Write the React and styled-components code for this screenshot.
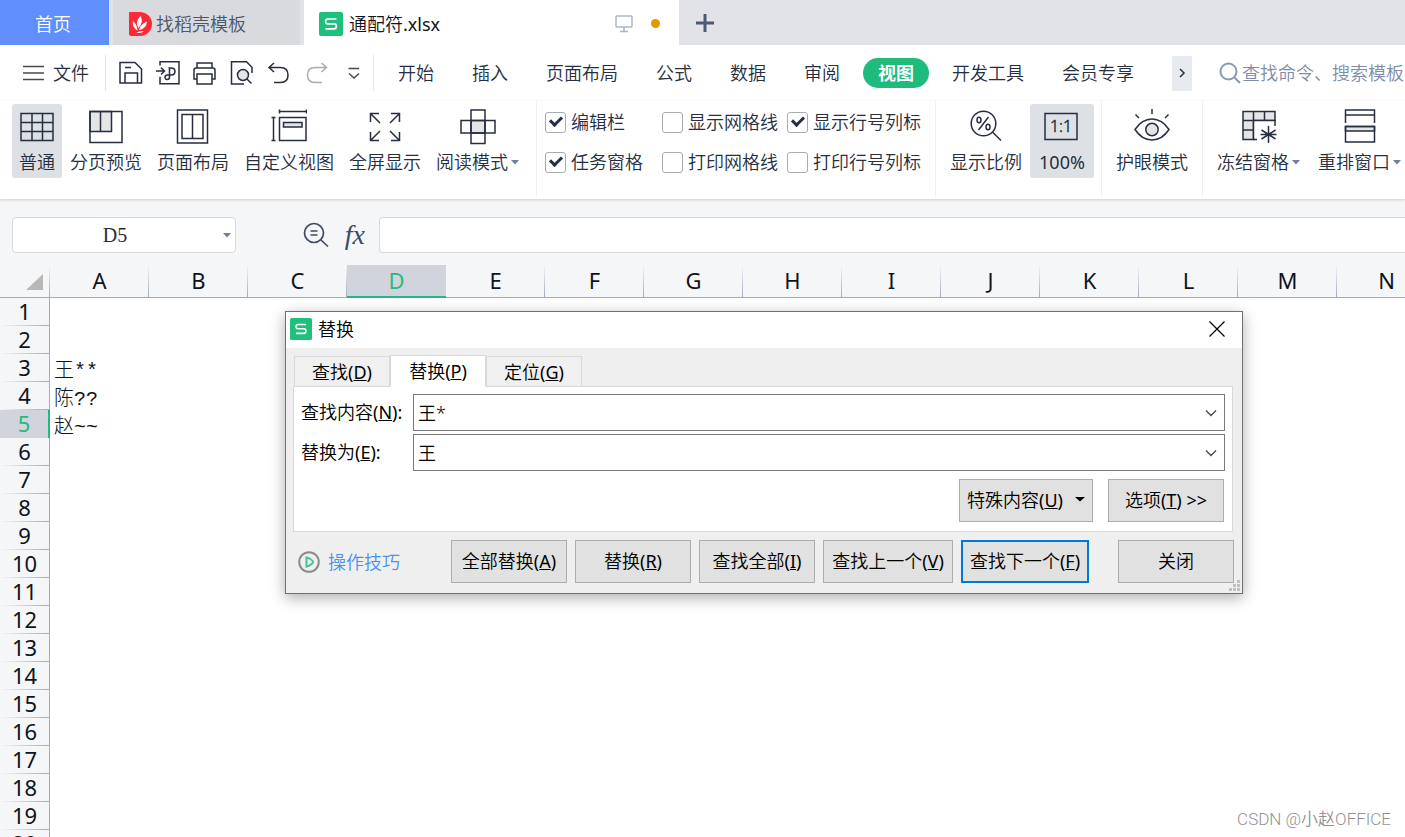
import React from 'react';
import styled, { createGlobalStyle, css } from 'styled-components';

const ink = '#262e40';
const green = '#1fbb7d';
const soft = '#e4e5e7';

const columns = ['A', 'B', 'C', 'D', 'E', 'F', 'G', 'H', 'I', 'J', 'K', 'L', 'M', 'N'];
const rows = Array.from({ length: 20 }, (_, i) => i + 1);
const values = { A3: '王**', A4: '陈??', A5: '赵~~' };
const menuTabs = ['开始', '插入', '页面布局', '公式', '数据', '审阅', '视图', '开发工具', '会员专享'];

const checks = [
  { id: 'edit-bar', label: '编辑栏', on: true },
  { id: 'show-grid', label: '显示网格线', on: false },
  { id: 'show-heads', label: '显示行号列标', on: true },
  { id: 'task-pane', label: '任务窗格', on: true },
  { id: 'print-grid', label: '打印网格线', on: false },
  { id: 'print-heads', label: '打印行号列标', on: false },
];

const Icon = ({ size = 24, width, stroke = ink, weight = 1.5, children }) => (
  <svg
    width={width || size}
    height={size}
    viewBox={`0 0 ${width || size} ${size}`}
    fill="none"
    stroke={stroke}
    strokeWidth={weight}
    aria-hidden="true"
  >
    {children}
  </svg>
);

const Caret = ({ color = '#6f7f99', width = 8 }) => (
  <svg width={width} height="5" viewBox="0 0 8 5" preserveAspectRatio="none" aria-hidden="true">
    <path d="M0 0h8L4 4.5z" fill={color} />
  </svg>
);

const SheetLogo = ({ size }) => (
  <svg width={size} height={size} viewBox="0 0 24 24" aria-hidden="true">
    <rect width="24" height="24" rx="2" fill="#1fbf7c" />
    <path
      d="M17.5 7H8.8Q6.6 7 6.6 9.4T8.8 11.8h6.4q2.2 0 2.2 2.5t-2.2 2.5H6.5"
      fill="none"
      stroke="#fff"
      strokeWidth="1.7"
    />
  </svg>
);

const quickIcons = [
  {
    name: '保存',
    icon: (
      <Icon>
        <path d="M1 1.500h15l6.500 6.500v14H1zM6 22v-10h12.500v10M6 6.500h6" />
      </Icon>
    ),
  },
  {
    name: '输出为PDF',
    icon: (
      <Icon>
        <path d="M4 4.500V.8h19v22H4v-7M0 10h8.500M5 6.500l3.500 3.500L5 13.500" />
        <path d="M12.500 7h2.500q4 0 4 3.500t-4 3.500h-3.500q-2.500 0-2.500 2.300t2.300 2.200 2.200-2.500V7" />
      </Icon>
    ),
  },
  {
    name: '打印',
    icon: (
      <Icon>
        <path d="M4 7V2h15v5M4 18H1V9q0-2 2-2h17q2 0 2 2v9h-3M4 13h15v10H4z" />
      </Icon>
    ),
  },
  {
    name: '打印预览',
    icon: (
      <Icon>
        <path d="M14 23H1.500V.8H16.500l5.500 5.500V12" />
        <circle cx="13" cy="14" r="5.500" fill={soft} />
        <path d="M17 18l4.500 4.500" />
      </Icon>
    ),
  },
  {
    name: '撤销',
    icon: (
      <Icon>
        <path d="M7 2L2 6.500 7 11M2 6.500h11.500q7.500 0 7.500 7.500t-7.500 7.500H7" />
      </Icon>
    ),
  },
  {
    name: '恢复',
    icon: (
      <Icon stroke="#a9abaf">
        <path d="M17.500 2l5 4.500-5 4.500M22.500 6.500H11Q3.500 6.500 3.500 14T11 21.500h7" />
      </Icon>
    ),
  },
  {
    name: '更多',
    icon: (
      <Icon stroke="#4a4a4a">
        <path d="M7.500 7.500h10.500M8 12.500l5 4.500 5-4.500" />
      </Icon>
    ),
  },
];

const viewTools = [
  {
    label: '普通',
    active: true,
    icon: (
      <Icon size={36}>
        <path d="M2 4.500h32v27H2zM13 4.500v27M23.500 4.500v27M2 13.500h32M2 22.500h32" />
      </Icon>
    ),
  },
  {
    label: '分页预览',
    icon: (
      <Icon size={36}>
        <path d="M2 2.500h21.500v20H2z" fill={soft} />
        <path d="M2 2.500h32v31H2zM12.500 2.500v20" />
      </Icon>
    ),
  },
  {
    label: '页面布局',
    icon: (
      <Icon size={36}>
        <path d="M2.500 1h30v33h-30zM7 5.500h21v24H7zM17.500 5.500v24" />
      </Icon>
    ),
  },
  {
    label: '自定义视图',
    icon: (
      <Icon size={36}>
        <path d="M8.500 2.500h27M8.500 .5v4M35.500 .5v4M2.500 8.500v23M.5 8.500h4M.5 31.500h4M8.500 8.500H35v23H8.500z" />
        <path d="M12.500 13.500h18.500v4.500H12.500z" fill={soft} />
      </Icon>
    ),
  },
  {
    label: '全屏显示',
    icon: (
      <Icon size={36}>
        <path d="M3.500 13V4.500H12M3.500 4.500L13 14M24 4.500h8.500V13M32.500 4.500L23 14M3.500 23v8.500H12M3.500 31.500L13 22M24 31.500h8.500V23M32.500 31.500L23 22" />
      </Icon>
    ),
  },
  {
    label: '阅读模式',
    menu: true,
    icon: (
      <Icon size={36}>
        <path d="M11 11.500h14v12.500H11z" fill={soft} />
        <path d="M1 11.500h34v12.500H1zM11 1h14v33.500H11z" />
      </Icon>
    ),
  },
];

const zoomTools = [
  {
    label: '显示比例',
    icon: (
      <Icon size={36}>
        <circle cx="15.500" cy="14.500" r="12.300" />
        <path d="M24.500 23l8.500 8.500M20.500 8l-10 13" />
        <ellipse cx="11" cy="11" rx="2" ry="2.800" />
        <ellipse cx="20" cy="18" rx="2" ry="2.800" />
      </Icon>
    ),
  },
  {
    label: '100%',
    active: true,
    latin: true,
    width: 64,
    icon: (
      <Icon size={36}>
        <path d="M1 4.500h32v26H1z" />
        <text
          x="17"
          y="23"
          textAnchor="middle"
          fontSize="16"
          fontFamily="'Noto Sans', sans-serif"
          fill={ink}
          stroke={ink}
          strokeWidth=".5"
        >
          1:1
        </text>
      </Icon>
    ),
  },
];

const eyeTools = [
  {
    label: '护眼模式',
    icon: (
      <Icon size={36}>
        <path d="M1 20.500Q8 10 18 10t17 10.500Q28 31 18 31T1 20.500z" />
        <circle cx="18" cy="20.500" r="6.200" fill={soft} />
        <path d="M18 0v5M1.500 5.500L5 9M34.500 5.500L31 9" />
      </Icon>
    ),
  },
];

const windowTools = [
  {
    label: '冻结窗格',
    menu: true,
    icon: (
      <Icon size={36}>
        <path d="M2 2.500h32v9H12.500v19H2z" fill={soft} />
        <path
          d="M12.500 11.500H34v19H12.500z"
          fill="#fff"
          stroke="none"
        />
        <path d="M2 11.500h32M12.500 2.500v28M23.500 2.500v9M2 21h10.500M34 11v6M12 30.500h4M27.500 17v17M20.500 21l14 9M34.500 21l-14 9M19.500 25.500h16" />
      </Icon>
    ),
  },
  {
    label: '重排窗口',
    menu: true,
    icon: (
      <Icon size={36}>
        <path d="M3.500 14V1h29v13M3.500 6h29" />
        <path d="M3.500 17.500h29V22h-29z" fill={soft} />
        <path d="M3.500 17.500h29V33h-29z" />
      </Icon>
    ),
  },
];

const ToolList = ({ items }) =>
  items.map((item) => (
    <ToolButton key={item.label} $active={item.active} $width={item.width}>
      {item.icon}
      <ToolLabel $latin={item.latin}>
        {item.label}
        {item.menu && <Caret />}
      </ToolLabel>
    </ToolButton>
  ));

const Key = ({ text, letter, after }) => (
  <span>
    {text}
    <Latin>
      (<u>{letter}</u>){after}
    </Latin>
  </span>
);

const ComboField = ({ id, text, letter, value }) => (
  <Field>
    <FieldLabel htmlFor={id}>
      <Key text={text} letter={letter} after=":" />
    </FieldLabel>
    <Combo>
      <ComboInput id={id} defaultValue={value} />
      <button aria-label="展开">
        <Icon size={12} stroke="#444" weight={1.3}>
          <path d="M1 3.500l5 5 5-5" />
        </Icon>
      </button>
    </Combo>
  </Field>
);

const ReplaceDialog = () => (
  <Dialog role="dialog" aria-label="替换">
    <TitleBar>
      <SheetLogo size={22} />
      <Title>替换</Title>
      <CloseButton aria-label="关闭">
        <Icon size={16} stroke="#000" weight={1.2}>
          <path d="M.5 .5l15 15M15.500 .5l-15 15" />
        </Icon>
      </CloseButton>
    </TitleBar>
    <DialogBody>
      <DialogTabs role="tablist">
        <DialogTab role="tab">
          <Key text="查找" letter="D" />
        </DialogTab>
        <DialogTab role="tab" aria-selected="true" $active>
          <Key text="替换" letter="P" />
        </DialogTab>
        <DialogTab role="tab">
          <Key text="定位" letter="G" />
        </DialogTab>
      </DialogTabs>
      <Panel>
        <ComboField id="find-what" text="查找内容" letter="N" value="王*" />
        <ComboField id="replace-with" text="替换为" letter="E" value="王" />
        <PanelActions>
          <DialogButton $width={134}>
            <Key text="特殊内容" letter="U" />
            <Caret color="#000" width={10} />
          </DialogButton>
          <DialogButton>
            <Key text="选项" letter="T" after=" >>" />
          </DialogButton>
        </PanelActions>
      </Panel>
      <Footer>
        <TipsLink href="#tips">
          <Icon size={22} stroke="#8c8c8c" weight={2}>
            <circle cx="11" cy="11" r="9.800" />
            <path d="M8.500 6.500v9l3-1q3.500-2 3.500-3.500t-3.500-3.500z" stroke="#43c795" />
          </Icon>
          操作技巧
        </TipsLink>
        <FooterActions>
          <DialogButton>
            <Key text="全部替换" letter="A" />
          </DialogButton>
          <DialogButton>
            <Key text="替换" letter="R" />
          </DialogButton>
          <DialogButton>
            <Key text="查找全部" letter="I" />
          </DialogButton>
          <DialogButton $width={130}>
            <Key text="查找上一个" letter="V" />
          </DialogButton>
          <DialogButton $width={128} $primary>
            <Key text="查找下一个" letter="F" />
          </DialogButton>
        </FooterActions>
        <DialogButton>关闭</DialogButton>
      </Footer>
    </DialogBody>
    <Grip>
      <svg width="11" height="11" viewBox="0 0 11 11" fill="#bfbfbf" aria-hidden="true">
        <path d="M8 0h3v3H8zM4 4h3v3H4zM8 4h3v3H8zM0 8h3v3H0zM4 8h3v3H4zM8 8h3v3H8z" />
      </svg>
    </Grip>
  </Dialog>
);

const App = () => {
  return (
    <>
      <GlobalStyle />
      <Page>
        <FileTabs>
          <HomeTab>首页</HomeTab>
          <FileTab $width={187}>
            <svg width="24" height="24" viewBox="0 0 24 24" aria-hidden="true">
              <path d="M1 0h11a12 12 0 0 1 0 24H3q-2 0-2-2z" fill="#ff2a38" />
              <path
                d="M10.500 16Q6.500 10 12.500 4q3.500 6-2 12zM9.500 18.500Q3.500 15 5 9q4.500 4 4.500 9.500zM11 18q1.500-6 8-8.500-.5 7-8 8.500zM8.500 20.500q4-2 7.500-1.500-3.500 3-7.500 1.500z"
                fill="#fff"
              />
            </svg>
            找稻壳模板
          </FileTab>
          <FileTab $width={375} $active>
            <SheetLogo size={24} />
            <span>
              通配符<Latin>.xlsx</Latin>
            </span>
            <TabStatus>
              <Icon size={18} stroke="#a9b5cc">
                <path d="M1 2q0-1 1-1h14q1 0 1 1v9q0 1-1 1H2q-1 0-1-1zM9 12v4M5 16.500h8" />
              </Icon>
              <Dot />
            </TabStatus>
          </FileTab>
          <AddTab aria-label="新建">
            <Icon size={20} stroke="#4c5876" weight={3}>
              <path d="M10 1v18M1 10h18" />
            </Icon>
          </AddTab>
        </FileTabs>

        <MenuBar>
          <FileMenu>
            <Icon size={16} width={21} stroke="#4a4a4a">
              <path d="M0 1.500h21M0 8h21M0 14.500h21" />
            </Icon>
            文件
          </FileMenu>
          <QuickBar>
            {quickIcons.map((item) => (
              <QuickButton key={item.name} aria-label={item.name}>
                {item.icon}
              </QuickButton>
            ))}
          </QuickBar>
          <MenuTabs>
            {menuTabs.map((name) => (
              <MenuTab key={name} href="#ribbon" $active={name === '视图'}>
                {name}
              </MenuTab>
            ))}
          </MenuTabs>
          <MoreButton aria-label="更多选项卡">
            <Icon size={10}>
              <path d="M3 1l4 4-4 4" />
            </Icon>
          </MoreButton>
          <Search>
            <Icon size={22} stroke="#8b99b3" weight={2}>
              <circle cx="9.500" cy="9.500" r="8" />
              <path d="M15 15l6 6" />
            </Icon>
            <SearchInput aria-label="搜索" placeholder="查找命令、搜索模板" />
          </Search>
        </MenuBar>

        <Ribbon id="ribbon">
          <ToolGroup $pad="0 10px 0 12px">
            <ToolList items={viewTools} />
          </ToolGroup>
          <ToolGroup $pad="0 14px 0 8px">
            <CheckGrid>
              {checks.map((item) => (
                <CheckLabel key={item.id} htmlFor={item.id}>
                  <CheckBox id={item.id} type="checkbox" defaultChecked={item.on} />
                  {item.label}
                </CheckLabel>
              ))}
            </CheckGrid>
          </ToolGroup>
          <ToolGroup>
            <ToolList items={zoomTools} />
          </ToolGroup>
          <ToolGroup>
            <ToolList items={eyeTools} />
          </ToolGroup>
          <ToolGroup>
            <ToolList items={windowTools} />
          </ToolGroup>
        </Ribbon>

        <FormulaBar>
          <NameBox>
            <NameInput aria-label="名称框" defaultValue="D5" />
            <Caret />
          </NameBox>
          <FormulaTools>
            <FormulaButton aria-label="查找">
              <Icon size={26} stroke="#404b62" weight={1.700}>
                <circle cx="11" cy="11" r="9.500" />
                <path d="M18 18l7 6.500M7.500 9h7M7.500 13h7" />
              </Icon>
            </FormulaButton>
            <FormulaButton>fx</FormulaButton>
          </FormulaTools>
          <FormulaInput aria-label="编辑栏" />
        </FormulaBar>

        <Workspace>
          <Sheet>
            <colgroup>
              <col width="50" />
              {columns.map((name) => (
                <col key={name} width="99" />
              ))}
            </colgroup>
            <thead>
              <tr>
                <Corner>
                  <svg width="17" height="16" viewBox="0 0 17 16" aria-hidden="true">
                    <path d="M17 0v16H0z" fill="#b8b8b8" />
                  </svg>
                </Corner>
                {columns.map((name) => (
                  <ColumnHead key={name} scope="col" $active={name === 'D'}>
                    {name}
                  </ColumnHead>
                ))}
              </tr>
            </thead>
            <tbody>
              {rows.map((row) => (
                <tr key={row}>
                  <RowHead scope="row" $active={row === 5}>
                    {row}
                  </RowHead>
                  {columns.map((name) => (
                    <Cell key={name}>{values[name + row]}</Cell>
                  ))}
                </tr>
              ))}
            </tbody>
          </Sheet>
          <ReplaceDialog />
          <Credit>CSDN @小赵OFFICE</Credit>
        </Workspace>
      </Page>
    </>
  );
};

export default App;

const GlobalStyle = createGlobalStyle`
  *, *::after {
    box-sizing: border-box;
  }
  body {
    margin: 0;
    overflow: hidden;
  }
  body, button, input {
    font-family: 'Noto Sans', 'Noto Sans CJK SC', sans-serif;
    font-size: 18px;
    font-weight: 350;
    line-height: 24px;
    color: ${ink};
  }
  button {
    padding: 0;
    border: 0;
    background: none;
    white-space: nowrap;
  }
  a {
    text-decoration: none;
    white-space: nowrap;
  }
  svg {
    display: block;
    flex: none;
  }
`;

const Latin = styled.span`
  font-weight: 400;
`;

const Page = styled.div`
  height: 100vh;
  display: flex;
  flex-direction: column;
  overflow: hidden;
  background: #fff;
`;

const FileTabs = styled.div`
  flex: none;
  height: 45px;
  display: flex;
  gap: 4px;
  background: #e2e3e8;
`;

const HomeTab = styled.button`
  width: 109px;
  padding: 2px 3px 0 0;
  background: #608ffc;
  color: #fff;
`;

const FileTab = styled.button`
  width: ${({ $width }) => $width}px;
  padding: 2px 15px 0;
  display: flex;
  align-items: center;
  gap: ${({ $active }) => ($active ? 6 : 4)}px;
  background: ${({ $active }) => ($active ? '#fff' : '#d9dade')};
  color: ${({ $active }) => ($active ? '#10131a' : '#4c566b')};
`;

const TabStatus = styled.span`
  margin-left: auto;
  padding-right: 4px;
  display: flex;
  align-items: center;
  gap: 18px;
`;

const Dot = styled.span`
  width: 9px;
  height: 9px;
  border-radius: 50%;
  background: #e59700;
`;

const AddTab = styled.button`
  width: 44px;
  display: flex;
  align-items: center;
  justify-content: center;
`;

const MenuBar = styled.div`
  flex: none;
  height: 56px;
  display: flex;
  align-items: center;
`;

const FileMenu = styled.button`
  height: 36px;
  padding: 0 16px 0 23px;
  display: flex;
  align-items: center;
  gap: 9px;
  border-right: 1px solid #e4e5e7;
`;

const QuickBar = styled.div`
  height: 36px;
  padding: 0 2px 0 6px;
  display: flex;
  border-right: 1px solid #e4e5e7;
`;

const QuickButton = styled.button`
  width: 37px;
  display: flex;
  align-items: center;
  justify-content: center;
`;

const MenuTabs = styled.nav`
  padding: 0 23px 0 9px;
  display: flex;
  gap: 8px;
`;

const MenuTab = styled.a`
  height: 30px;
  padding: 0 15px;
  border-radius: 15px;
  line-height: 30px;
  color: ${ink};
  ${({ $active }) =>
    $active &&
    css`
      background: ${green};
      color: #fff;
      font-weight: 700;
    `}
`;

const MoreButton = styled.button`
  flex: none;
  width: 20px;
  height: 35px;
  display: flex;
  align-items: center;
  justify-content: center;
  background: #e7eaee;
`;

const Search = styled.div`
  flex: 1;
  min-width: 0;
  padding-left: 27px;
  display: flex;
  align-items: center;
  gap: 1px;
`;

const SearchInput = styled.input`
  flex: 1;
  min-width: 0;
  padding: 0;
  border: 0;
  outline: 0;
  &::placeholder {
    color: #7f8ca6;
    opacity: 1;
  }
`;

const Ribbon = styled.div`
  flex: none;
  position: relative;
  padding-bottom: 3px;
  height: 98px;
  display: flex;
  box-shadow: 0 1px 3px rgba(0, 0, 0, 0.16);
`;

const ToolGroup = styled.div`
  flex: none;
  padding: ${({ $pad }) => $pad || '0 7px'};
  display: flex;
  gap: 1px;
  border-right: 1px solid #eff0f2;
  &:last-child {
    gap: 4px;
    border-right: 0;
  }
`;

const ToolButton = styled.button`
  height: 74px;
  min-width: ${({ $width }) => $width || 50}px;
  margin-top: 3px;
  padding: 5px 7px 4px;
  display: flex;
  flex-direction: column;
  align-items: center;
  justify-content: space-between;
  border-radius: 3px;
  background: ${({ $active }) => ($active ? '#dde1e5' : 'transparent')};
`;

const ToolLabel = styled.span`
  display: flex;
  align-items: center;
  gap: 3px;
  font-weight: ${({ $latin }) => ($latin ? 400 : 350)};
`;

const CheckGrid = styled.div`
  height: 80px;
  margin-top: 1px;
  display: grid;
  grid-template-columns: 117px 125px auto;
  align-items: center;
`;

const CheckLabel = styled.label`
  display: flex;
  align-items: center;
  gap: 5px;
  white-space: nowrap;
`;

const CheckBox = styled.input`
  appearance: none;
  width: 21px;
  height: 21px;
  margin: 0;
  display: grid;
  place-items: center;
  border: 1px solid #a9abb3;
  border-radius: 3px;
  background: #fff;
  &:checked::after {
    content: '';
    width: 12px;
    height: 8px;
    margin-bottom: 4px;
    border: solid ${ink};
    border-width: 0 0 3px 3px;
    transform: rotate(-45deg);
  }
`;

const FormulaBar = styled.div`
  flex: none;
  height: 66px;
  padding: 18px 0 12px 12px;
  display: flex;
  background: #f5f6f8;
`;

const NameBox = styled.div`
  width: 224px;
  padding-right: 4px;
  display: flex;
  align-items: center;
  border: 1px solid #d7d9de;
  border-radius: 4px;
  background: #fff;
`;

const NameInput = styled.input`
  flex: 1;
  min-width: 0;
  padding: 0 6px 0 0;
  border: 0;
  outline: 0;
  background: none;
  font-family: 'Liberation Serif', serif;
  font-size: 20px;
  text-align: center;
`;

const FormulaTools = styled.div`
  width: 143px;
  padding-right: 14px;
  display: flex;
  align-items: center;
  justify-content: flex-end;
  gap: 16px;
`;

const FormulaButton = styled.button`
  font-family: 'Liberation Serif', serif;
  font-size: 28px;
  font-style: italic;
  color: #404b62;
`;

const FormulaInput = styled.input`
  flex: 1;
  min-width: 0;
  border: 1px solid #d7d9de;
  border-right: 0;
  border-radius: 4px 0 0 4px;
  outline: 0;
  background: #fff;
`;

const Workspace = styled.div`
  flex: 1;
  min-height: 0;
  position: relative;
  overflow: hidden;
`;

const Sheet = styled.table`
  width: 1436px;
  table-layout: fixed;
  border-collapse: separate;
  border-spacing: 0;
`;

const Corner = styled.td`
  height: 33px;
  padding: 0 7px 7px 0;
  vertical-align: bottom;
  background: linear-gradient(#f5f6f800, #a3abbf) right / 1px 100% no-repeat #f5f6f8;
  border-bottom: 1px solid #a3abbf;
  svg {
    margin-left: auto;
  }
`;

const ColumnHead = styled.th`
  height: 33px;
  padding: 0 0 2px;
  font-size: 22px;
  font-weight: 400;
  line-height: 28px;
  color: ${({ $active }) => ($active ? green : '#10131a')};
  border-bottom: 1px solid #a3abbf;
  background: linear-gradient(#f5f6f800, #a3abbf) right / 1px 100% no-repeat #f5f6f8;
  ${({ $active }) =>
    $active &&
    css`
      padding-bottom: 1px;
      border-bottom: 2px solid ${green};
      background: #d1d4dc;
    `}
`;

const RowHead = styled.th`
  height: 28px;
  padding: 0 0 2px;
  font-size: 22px;
  font-weight: 400;
  line-height: 26px;
  color: ${({ $active }) => ($active ? green : '#10131a')};
  border-right: 1px solid #a3abbf;
  background: linear-gradient(90deg, #f5f6f800, #a3abbf) bottom / 100% 1px no-repeat #f5f6f8;
  ${({ $active }) =>
    $active &&
    css`
      border-right: 2px solid ${green};
      background: #d1d4dc;
    `}
`;

const Cell = styled.td`
  height: 28px;
  padding: 7px 4px 0;
  font-family: 'Liberation Mono', 'Noto Sans CJK SC', monospace;
  font-size: 20px;
  font-weight: 300;
  line-height: 20px;
  white-space: nowrap;
  color: #10131a;
`;

/* floats over the cells */
const Dialog = styled.section`
  position: absolute;
  left: 285px;
  top: 46px;
  width: 958px;
  border: 1px solid #6e7072;
  background: #efefef;
  color: #000;
  box-shadow: 0 4px 14px rgba(0, 0, 0, 0.32);
  button {
    color: #000;
  }
`;

const TitleBar = styled.header`
  height: 36px;
  padding: 0 17px 2px 4px;
  display: flex;
  align-items: center;
  gap: 6px;
  background: #fff;
`;

const Title = styled.h1`
  margin: 0;
  font-size: 18px;
  font-weight: 350;
`;

const CloseButton = styled.button`
  margin-left: auto;
`;

const DialogBody = styled.div`
  padding: 7px 8px 10px 7px;
`;

const DialogTabs = styled.div`
  position: relative;
  z-index: 1;
  margin-bottom: -1px;
  padding-left: 1px;
  display: flex;
  align-items: flex-end;
`;

const DialogTab = styled.button`
  width: 96px;
  height: ${({ $active }) => ($active ? 32 : 31)}px;
  border: 1px solid #d9d9d9;
  border-bottom-color: ${({ $active }) => ($active ? '#fff' : '#d9d9d9')};
  background: ${({ $active }) => ($active ? '#fff' : '#f0f0f0')};
`;

const Panel = styled.div`
  margin-right: 1px;
  padding: 7px;
  padding-bottom: 9px;
  border: 1px solid #d9d9d9;
  background: #fff;
`;

const Field = styled.div`
  height: 37px;
  margin-bottom: 3px;
  display: flex;
  align-items: center;
`;

const FieldLabel = styled.label`
  width: 112px;
  padding-bottom: 2px;
  color: #000;
`;

const Combo = styled.div`
  flex: 1;
  height: 37px;
  padding: 0 7px 0 4px;
  display: flex;
  align-items: center;
  border: 1px solid #7a7a7a;
`;

const ComboInput = styled.input`
  flex: 1;
  min-width: 0;
  padding: 0;
  border: 0;
  outline: 0;
  color: #000;
`;

const PanelActions = styled.div`
  margin-top: 8px;
  padding-right: 1px;
  display: flex;
  justify-content: flex-end;
  gap: 15px;
`;

const DialogButton = styled.button`
  flex: none;
  width: ${({ $width }) => $width || 116}px;
  height: 43px;
  padding-bottom: 2px;
  display: flex;
  align-items: center;
  justify-content: center;
  gap: 12px;
  border: ${({ $primary }) => ($primary ? '2px solid #0078d7' : '1px solid #adadad')};
  background: #e1e1e1;
`;

const Footer = styled.footer`
  margin-top: 8px;
  padding-left: 5px;
  display: flex;
  align-items: center;
  justify-content: space-between;
`;

const TipsLink = styled.a`
  width: 153px;
  display: flex;
  align-items: center;
  gap: 8px;
  color: #4791f0;
`;

const FooterActions = styled.div`
  margin-right: 29px;
  display: flex;
  gap: 8px;
`;

const Grip = styled.span`
  position: absolute;
  right: 2px;
  bottom: 2px;
`;

const Credit = styled.p`
  position: absolute;
  right: 14px;
  bottom: 6px;
  margin: 0;
  font-family: Roboto, 'Noto Sans CJK SC', sans-serif;
  font-size: 17px;
  color: #929292;
`;
